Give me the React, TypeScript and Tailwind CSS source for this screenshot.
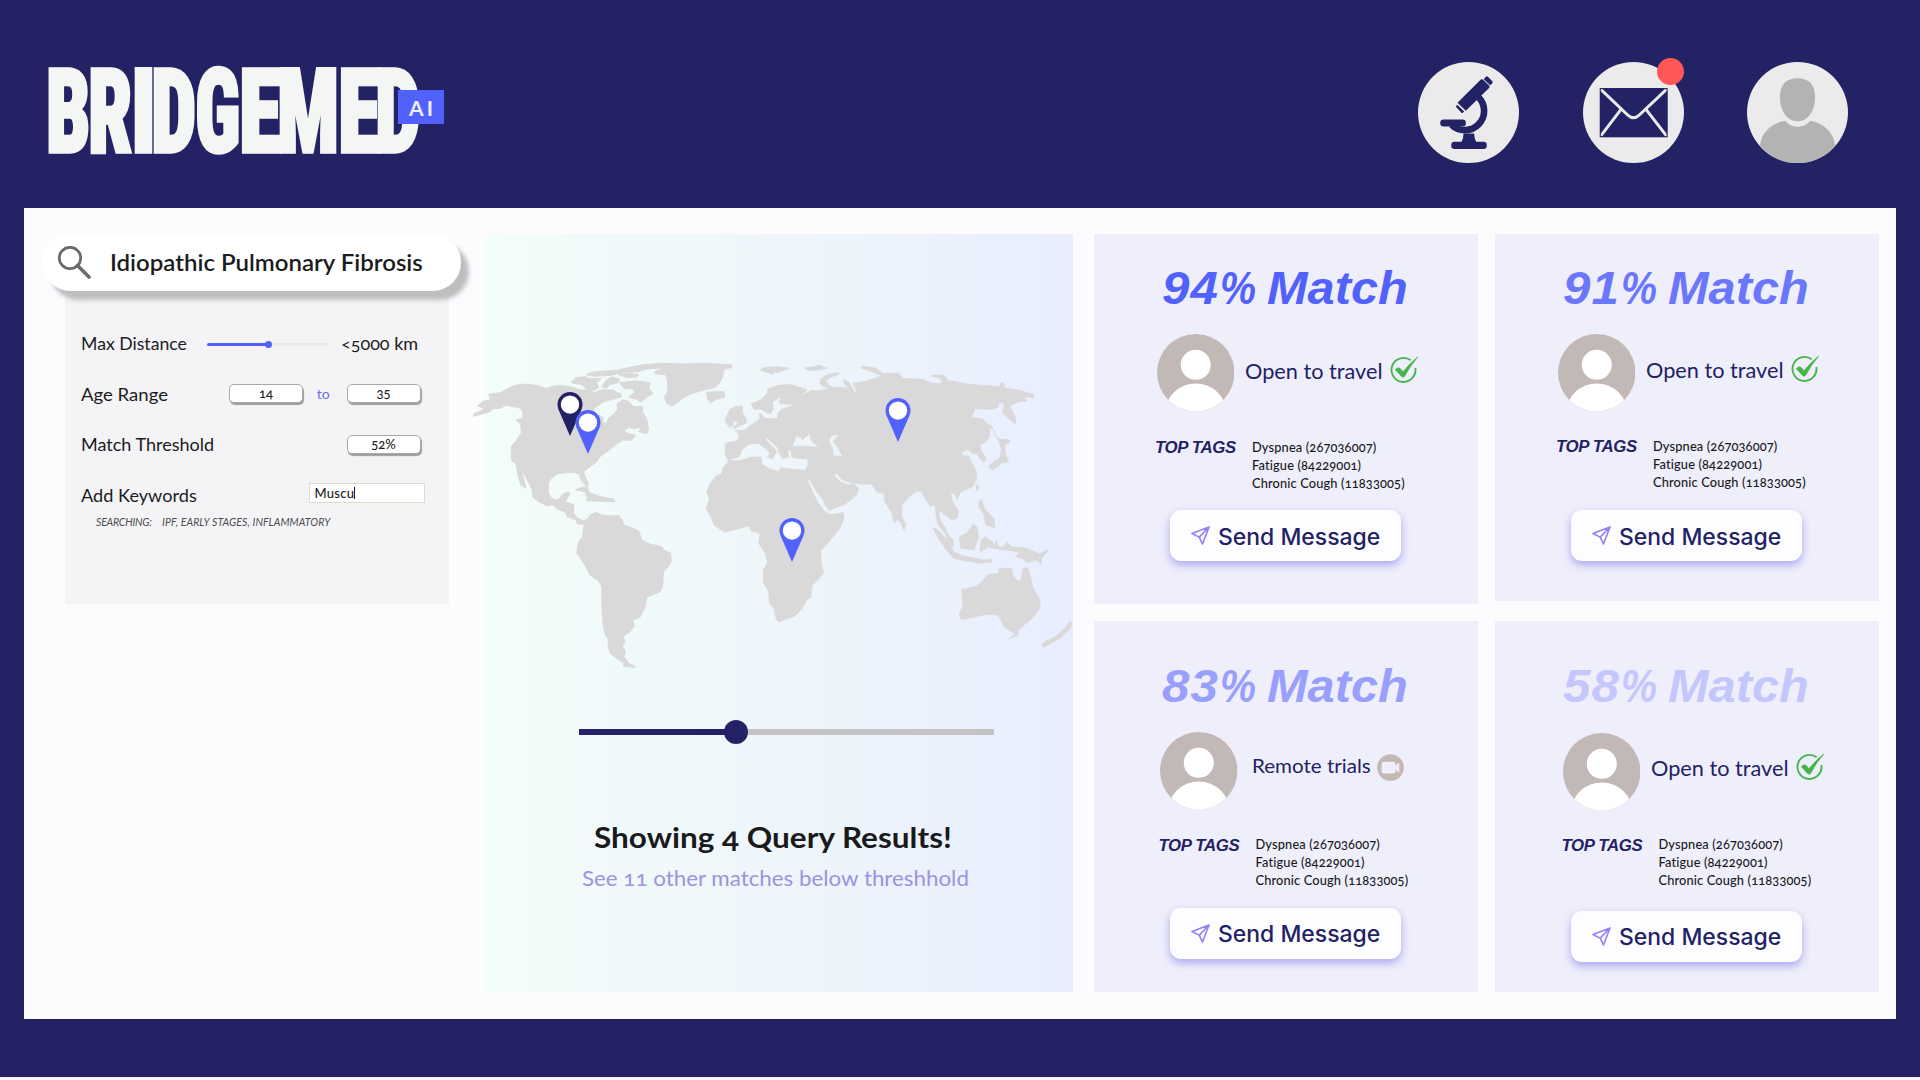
import type { ReactNode } from 'react';

const lato = "font-['Lato','Open_Sans',sans-serif] oldstyle-nums";
const inter = "font-['Inter',sans-serif]";
const liberation = "font-['Liberation_Sans',Arial,sans-serif]";

/* ---------- Header ---------- */

const wordmark = [
  { char: 'B', fit: 'w-[42.4px] scale-x-[0.675]' },
  { char: 'R', fit: 'w-[42.8px] scale-x-[0.675]' },
  { char: 'I', fit: 'w-[20.4px] scale-x-[0.77]' },
  { char: 'D', fit: 'w-[44.4px] scale-x-[0.695]' },
  { char: 'G', fit: 'w-[43.9px] scale-x-[0.665]' },
  { char: 'E', fit: 'w-[37.2px] scale-x-[0.76]' },
  { char: 'M', fit: 'w-[61px] scale-x-[0.705]' },
  { char: 'E', fit: 'w-[37.2px] scale-x-[0.76]' },
  { char: 'D', fit: 'w-[44px] scale-x-[0.70]' },
];

function Logo() {
  return (
    <div className="relative h-[101px] w-[397px]">
      <div className="ml-[-2.5px] mt-[-18.5px] flex h-[138px] font-['Roboto',sans-serif] text-[116px] font-black leading-[138px] text-[#f4f6f4] [-webkit-text-stroke:3.5px_#f4f6f4] [font-stretch:75%]">
        {wordmark.map((l, i) => (
          <span key={i} className={`shrink-0 origin-left ${l.fit}`}>
            {l.char}
          </span>
        ))}
      </div>
      <div className={`absolute left-[350px] top-[28.5px] flex h-[34px] w-[46px] items-center justify-center bg-[#5161fc] pl-[3px] text-[21px] font-bold leading-none tracking-[3px] text-[#eef0ff] ${lato}`}>
        AI
      </div>
    </div>
  );
}

function MicroscopeIcon() {
  return (
    <svg className="size-[101px]" viewBox="85 65 304 304">
      <circle cx="237" cy="217" r="152" fill="#ebebeb" />
      <g fill="#222265">
        <path d="M204 188 L274 118 Q278 115 282 119 L299 136 Q302 140 299 143 L229 212 Z" />
        <path d="M283 117 L289 110 Q292 106 296 110 L309 123 Q311 127 308 130 L302 135 Z" />
        <path d="M199 200 Q198 198 201 196 L205 195 L224 214 L220 218 Q217 220 215 217 Z" />
        <rect x="152" y="238" width="77" height="21" rx="10" />
        <rect x="185" y="305" width="107" height="22" rx="10" />
        <path d="M222 280 L254 280 Q254 296 261 308 L215 308 Q222 296 222 280 Z" />
      </g>
      <path d="M266 170 A58 58 0 1 1 186 254" fill="none" stroke="#222265" strokeWidth="20" />
    </svg>
  );
}

function MailIcon() {
  return (
    <svg className="size-[101px]" viewBox="577 65 304 304">
      <circle cx="729" cy="217" r="152" fill="#ebebeb" />
      <rect x="628" y="144" width="203" height="147" fill="#222265" />
      <g fill="none" stroke="#ebebeb" strokeWidth="9">
        <path d="M629 146 L713 226 Q729 240 745 226 L830 146" />
        <path d="M692 207 L630 288 M766 207 L829 288" />
      </g>
      <rect x="629" y="145" width="201" height="145" fill="none" stroke="#222265" strokeWidth="3" />
    </svg>
  );
}

function ProfileIcon() {
  return (
    <svg className="size-[101px]" viewBox="1071 65 304 304">
      <clipPath id="profile-clip">
        <circle cx="1223" cy="217" r="152" />
      </clipPath>
      <circle cx="1223" cy="217" r="152" fill="#ebebeb" />
      <g fill="#b3b3b3" clipPath="url(#profile-clip)">
        <path d="M1223 114 C1256 114 1276 132 1276 170 C1276 212 1254 243 1223 243 C1192 243 1170 212 1170 170 C1170 132 1190 114 1223 114 Z" />
        <path d="M1110 318 C1113 276 1148 246 1187 242 C1203 266 1243 266 1261 242 C1300 248 1334 278 1336 318 L1336 370 L1110 370 Z" />
      </g>
    </svg>
  );
}

function Header() {
  return (
    <header className="flex h-[208px] items-start justify-between pl-[48px] pr-[72px] pt-[61.5px]">
      <Logo />
      <div className="flex gap-[63.5px]">
        <MicroscopeIcon />
        <div className="relative">
          <MailIcon />
          <span className="absolute right-0 top-[-3.5px] size-[27px] rounded-full bg-[#ff5757]" />
        </div>
        <ProfileIcon />
      </div>
    </header>
  );
}

/* ---------- Search and filters ---------- */

function FilterRow({ label, stretch, children }: { label: string; stretch: string; children: ReactNode }) {
  return (
    <div className="flex h-[50.6px] items-center justify-between pl-[16px]">
      <span className={`mt-[2.5px] origin-left whitespace-nowrap text-[16.5px] leading-none ${stretch}`}>{label}</span>
      {children}
    </div>
  );
}

function ValueBox({ children }: { children: ReactNode }) {
  return (
    <div className="flex h-[19px] w-[74px] items-center justify-center rounded-[5px] border border-[#a9a9ab] bg-white text-[13px] font-medium leading-none shadow-[1px_2px_1px_#9d9d9f]">
      {children}
    </div>
  );
}

function SearchColumn() {
  return (
    <aside className={`w-[461px] shrink-0 pl-[18px] pt-[26px] text-[#1c1c1e] ${lato}`}>
      <div className="relative z-10 flex h-[57px] w-[418.5px] items-center rounded-full bg-white pl-[16px] shadow-[8px_9px_4px_#bebec0]">
        <svg className="size-[33px]" viewBox="0 0 33 33" fill="none" stroke="#6b6b6b">
          <circle cx="12" cy="12" r="10.7" strokeWidth="2.8" />
          <path d="M19.5 19.5 L31 31" strokeWidth="3.6" strokeLinecap="round" />
        </svg>
        <span className="ml-[18.5px] mt-[2px] origin-left scale-x-[1.067] whitespace-nowrap text-[22.5px] font-semibold leading-none">
          Idiopathic Pulmonary Fibrosis
        </span>
      </div>
      <section className="ml-[23px] mt-[-29px] h-[342px] w-[383.5px] bg-[#f4f4f6] pt-[56px]">
        <FilterRow label="Max Distance" stretch="scale-x-[1.07]">
          <div className="mr-[29px] mt-[2px] flex items-center">
            <div className="flex h-[3px] w-[121px] items-center rounded-full bg-[#e9e9eb]">
              <div className="h-[3px] w-[60px] rounded-full bg-[#5161fc]" />
              <div className="-ml-[2px] size-[7px] rounded-full bg-[#5161fc]" />
            </div>
            <span className="ml-[13.5px] w-[78.5px] origin-left scale-x-[1.09] whitespace-nowrap text-[16.5px] leading-none">&lt;5000 km</span>
          </div>
        </FilterRow>
        <FilterRow label="Age Range" stretch="scale-x-[1.125]">
          <div className="mr-[28px] flex items-center">
            <ValueBox>14</ValueBox>
            <span className="w-[43.5px] pr-[3px] text-center text-[14px] leading-none text-[#6a72e0]">to</span>
            <ValueBox>35</ValueBox>
          </div>
        </FilterRow>
        <FilterRow label="Match Threshold" stretch="scale-x-[1.092]">
          <div className="mr-[28px]">
            <ValueBox>52%</ValueBox>
          </div>
        </FilterRow>
        <FilterRow label="Add Keywords" stretch="scale-x-[1.1]">
          <div className="mb-[4px] mr-[24px] flex h-[20px] w-[116px] items-center border border-[#dcdccb] bg-white pl-[5px] text-[13px] font-medium leading-none tracking-[0.3px]">
            <span className="mt-px">Muscu</span>
            <span className="h-[12px] w-px bg-[#1c1c1e]" />
          </div>
        </FilterRow>
        <p className="ml-[31px] mt-[-5px] flex whitespace-nowrap text-[10.5px] italic leading-[14px] text-[#4c4c4e]">
          <span className="w-[66px] tracking-[-0.2px]">SEARCHING:</span>
          <span className="tracking-[0.1px]">IPF, EARLY STAGES, INFLAMMATORY</span>
        </p>
      </section>
    </aside>
  );
}

/* ---------- Map ---------- */

function WorldMap() {
  return (
    <svg className="absolute left-[-15px] top-[106px] h-[340px] w-[603px]" viewBox="0 0 1809 1020">
      <g fill="#d9d9d9" stroke="#d9d9d9" strokeWidth="3" strokeLinejoin="round" fillRule="evenodd">
        <path d="M11 222 Q28 213 45 207 L23 198 L38 184 L62 180 L56 163 L92 158 L108 149 C130 135 150 132 170 133 C195 134 215 140 228 146 C245 137 270 135 295 139 L332 150 L362 150 L372 158 L392 150 L430 150 L440 158 L452 160 L455 170 L428 178 L400 186 L378 200 L368 212 L385 225 L398 232 L400 250 L410 250 L415 235 L432 222 L443 208 L441 192 L458 180 L476 184 L490 200 L517 200 L519 220 L530 235 L536 270 L530 281 L506 275 L516 262 L490 266 L478 262 L462 270 L472 280 L497 286 L485 300 L458 301 L440 312 L415 332 L390 350 L380 365 L360 380 L341 395 L345 410 L355 430 L352 442 L343 432 L332 418 L328 402 L310 397 L290 397 L262 402 L245 413 L235 430 L235 455 L242 472 L254 480 L268 478 L275 465 L288 457 L300 459 L292 475 L285 485 L300 490 L311 495 L310 518 L322 534 L340 542 L352 538 L362 524 L378 517 L395 525 L420 528 L445 526 L455 538 L462 555 L490 565 L508 575 L514 600 L540 612 L575 620 L582 630 L602 640 L604 663 L595 680 L580 695 L578 740 L570 755 L530 772 L526 798 L510 832 L487 842 L493 858 L478 878 L459 888 L465 905 L457 918 L466 935 L462 950 L475 968 L497 982 L460 979 L462 968 L440 956 L420 938 L415 920 L414 896 L406 885 L399 850 L396 800 L395 738 L385 722 L360 705 L345 675 L320 638 L326 605 L338 590 L342 553 L322 552 L318 540 L292 530 L285 515 L262 508 L250 495 L230 497 L210 487 L188 472 L187 450 L172 420 L154 386 L160 412 L168 445 L153 436 L145 408 L138 372 L124 360 L124 320 L140 300 L154 280 L152 252 L139 240 L158 234 L158 212 L145 202 L130 200 L108 196 L88 206 L70 205 L60 215 L11 229 Z" />
        <path d="M303 127 L318 113 L345 110 L360 116 L392 116 L380 130 L387 142 L372 151 L350 148 L335 133 L312 130 Z" />
        <path d="M348 104 L375 95 L440 91 L480 82 L520 74 L580 70 L640 72 L700 70 L784 74 L787 82 L762 88 L758 110 L748 130 L735 142 L700 150 L660 163 L638 175 L620 190 L606 197 L590 190 L583 170 L594 155 L592 120 L585 103 L556 102 L553 96 L585 83 L530 87 L505 95 L470 96 L420 106 L372 109 Z" />
        <path d="M445 104 L480 99 L506 105 L500 111 L470 112 Z M408 122 L426 110 L448 118 L443 128 L420 134 L408 146 L396 140 Z" />
        <path d="M448 128 L500 123 L540 128 L537 145 L549 160 L530 172 L512 187 L500 178 L477 172 L495 155 L485 145 L463 146 Z" />
        <path d="M317 449 L340 441 L353 445 L358 458 L385 468 L432 478 L435 485 L400 484 L350 482 L352 472 L345 455 Z" />
        <path d="M710 157 L762 154 L763 172 L740 178 L722 188 L713 178 Z" />
      </g>
      <g transform="translate(660 0)" fill="#d9d9d9" stroke="#d9d9d9" strokeWidth="2" strokeLinejoin="round" fillRule="evenodd">
        <path d="M106 345 L106 310 L142 302 L148 286 L135 271 L165 270 L178 258 L200 245 L210 232 L206 221 L216 222 L222 235 L262 236 L264 220 L275 208 L318 193 L290 193 L268 190 L272 170 L248 186 L250 208 L242 221 L228 218 L215 208 L192 208 L183 192 L215 178 L232 160 L232 148 L262 136 L300 133 L330 142 L352 150 L330 168 L365 152 L400 150 L425 142 L460 142 L478 148 L462 130 L460 118 L475 125 L488 145 L495 160 L499 152 L488 130 L520 125 L575 108 L548 96 L512 84 L516 78 L555 84 L580 100 L625 99 L638 115 L700 118 L725 130 L756 130 L750 115 L722 108 L735 104 L762 106 L775 122 L800 125 L830 132 L930 140 L930 132 L938 127 L945 134 L938 142 L975 148 L1030 162 L1031 173 L1002 170 L1011 184 L985 186 L968 193 L960 202 L975 228 L977 253 L955 235 L936 215 L942 200 L938 186 L926 190 L925 200 L910 208 L855 206 L845 232 L878 236 L890 250 L900 265 L899 290 L888 306 L870 313 L872 330 L888 355 L882 368 L868 355 L862 342 L848 340 L833 328 L815 337 L816 346 L838 350 L845 368 L860 395 L860 415 L850 438 L832 448 L812 456 L801 480 L795 460 L782 462 L788 485 L806 515 L800 535 L785 540 L765 524 L748 510 L748 535 L765 562 L778 590 L791 600 L789 622 L775 605 L765 580 L745 555 L739 530 L735 495 L720 498 L705 475 L695 455 L680 454 L660 468 L636 495 L635 530 L641 540 L648 555 L642 570 L632 550 L624 538 L612 550 L605 520 L582 480 L582 460 L562 458 L545 432 L510 432 L470 425 L455 418 L438 400 L432 405 L450 425 L475 435 L490 430 L506 445 L500 465 L470 490 L418 512 L405 495 L400 480 L380 455 L358 417 L353 420 L370 460 L385 490 L405 515 L420 523 L460 518 L462 535 L450 565 L420 602 L392 632 L394 665 L401 700 L366 738 L363 772 L350 780 L335 808 L315 828 L265 846 L258 835 L252 805 L238 790 L236 757 L220 725 L220 690 L232 668 L226 640 L206 610 L210 580 L182 572 L178 558 L130 570 L105 577 L72 555 L62 530 L48 505 L58 475 L50 455 L60 430 L78 408 L95 402 L98 385 L115 365 Z M122 358 L125 362 L150 362 L180 352 L213 350 L216 372 L240 387 L265 394 L272 384 L345 391 L354 375 L353 357 L330 356 L305 352 L304 330 L292 335 L297 350 L278 356 L268 340 L262 322 L226 290 L228 300 L262 336 L255 342 L250 356 L232 352 L240 340 L225 325 L205 310 L178 312 L155 330 L148 350 Z M306 320 L318 290 L332 290 L335 300 L360 282 L362 300 L385 322 L340 318 Z M418 295 L428 286 L447 284 L430 305 L445 325 L458 350 L430 347 L428 325 L418 308 Z" />
        <path d="M210 90 Q220 79 260 80 L298 84 L275 94 L262 98 L255 95 L248 104 L235 98 Z M342 84 L365 81 L390 75 L402 82 L413 84 L400 88 L360 92 Z M389 132 L392 118 L410 104 L440 98 L449 102 L422 112 L409 122 L412 132 L428 142 L405 142 Z" />
        <path d="M120 208 L135 200 L158 198 L157 215 L168 235 L170 248 L150 258 L133 266 L129 262 L144 250 L128 240 L130 256 L118 262 L106 245 L108 232 Z" />
        <path d="M890 249 L905 258 L918 288 L930 298 L945 298 L960 300 L958 308 L944 315 L946 340 L956 365 L935 370 L908 391 L895 382 L910 366 L928 355 L935 330 L925 302 L910 272 Z M857 436 L864 434 L867 446 L861 451 Z" />
        <path d="M868 480 L875 479 L885 508 L912 535 L915 564 L887 554 L882 525 L866 500 Z M728 562 L745 570 L770 598 L792 635 L820 648 L880 660 L908 657 L905 667 L870 670 L820 662 L790 654 L765 625 L742 590 Z M808 590 L830 580 L850 553 L862 562 L866 590 L853 630 L812 625 Z" />
        <path d="M872 600 L885 591 L905 603 L915 618 L919 600 L925 620 L942 620 L950 606 L965 620 L1010 625 L1050 642 L1075 628 L1068 640 L1054 655 L1055 674 L1038 660 L1012 668 L995 655 L975 650 L990 638 L965 632 L930 628 L895 622 L870 636 Z" />
        <path d="M815 748 L862 738 L897 702 L925 700 L928 685 L965 685 L968 705 L982 722 L992 722 L998 690 L1005 682 L1013 684 L1020 705 L1030 745 L1051 782 L1048 808 L1030 832 L985 870 L984 886 L955 898 L975 882 L942 860 L925 825 L885 824 L815 839 L807 822 L818 800 Z M1053 914 L1065 905 L1095 890 L1125 865 L1138 845 L1146 848 L1142 865 L1110 895 L1062 922 Z" />
      </g>
    </svg>
  );
}

function Pin({ place, color }: { place: string; color: string }) {
  return (
    <svg className={`absolute h-[44px] w-[26px] ${place}`} viewBox="0 0 26 44">
      <path d="M13 0 C20 0 25.5 5.5 25.5 12.5 Q25.5 15 24.5 17.5 L13 44 L1.5 17.5 Q0.5 15 0.5 12.5 C0.5 5.5 6 0 13 0 Z" fill={color} />
      <circle cx="13" cy="12.6" r="9.2" fill="#fff" />
    </svg>
  );
}

function MapPanel() {
  return (
    <section className={`relative mt-[26px] h-[758px] w-[588px] shrink-0 bg-linear-to-r from-[#f3fdf9] via-[#eef6fb] to-[#e8eefe] ${lato}`}>
      <WorldMap />
      <Pin place="left-[72px] top-[157.5px]" color="#222265" />
      <Pin place="left-[90px] top-[175.5px]" color="#5161fc" />
      <Pin place="left-[400px] top-[163.5px]" color="#5161fc" />
      <Pin place="left-[293.5px] top-[283.5px]" color="#5161fc" />
      <div className="ml-[94px] mt-[486px] flex h-[24px] w-[415px] items-center">
        <div className="h-[6.5px] w-[150.5px] bg-[#222265]" />
        <div className="-ml-[6px] size-[24px] shrink-0 rounded-full bg-[#222265]" />
        <div className="h-[6.5px] grow bg-[#c4c4c6]" />
      </div>
      <h2 className="ml-[109px] mt-[73px] origin-left scale-x-[1.087] whitespace-nowrap text-[29px] font-bold leading-[40px] text-[#1a1a1c]">
        Showing 4 Query Results!
      </h2>
      <p className="ml-[97px] mt-[6.5px] origin-left scale-x-[1.09] whitespace-nowrap text-[20.5px] leading-[28px] text-[#9a94e0]">
        See 11 other matches below threshhold
      </p>
    </section>
  );
}

/* ---------- Match cards ---------- */

function Avatar() {
  return (
    <svg className="size-[77.5px] shrink-0" viewBox="0 0 78 78">
      <clipPath id="avatar-clip">
        <circle cx="39" cy="39" r="39" />
      </clipPath>
      <g clipPath="url(#avatar-clip)">
        <rect width="78" height="78" fill="#c2b8b6" />
        <circle cx="39" cy="31" r="15.1" fill="#fff" />
        <circle cx="39" cy="81" r="31.3" fill="#fff" />
      </g>
    </svg>
  );
}

function CheckIcon() {
  return (
    <svg className="h-[27px] w-[28px]" viewBox="933 408 84 81">
      <path d="M995 421 A36 36 0 1 0 1009 444" fill="none" stroke="#45b549" strokeWidth="5.5" />
      <path d="M949 449 Q956 440 963 445 L972 455 Q992 430 1016 411 Q992 440 977 469 Q972 475 967 469 Z" fill="#45b549" stroke="#45b549" strokeWidth="2" />
    </svg>
  );
}

function VideoIcon() {
  return (
    <svg className="size-[27px]" viewBox="0 0 27 27">
      <circle cx="13.5" cy="13.5" r="13.3" fill="#c2b8b6" />
      <rect x="4.6" y="7.8" width="14" height="11.8" rx="2" fill="#efeefb" />
      <path d="M18 12.5 L20.5 9.6 Q22.3 8.4 22.3 10 L22.3 17.4 Q22.3 19 20.5 17.8 L18 15 Z" fill="#efeefb" />
    </svg>
  );
}

function SendIcon() {
  return (
    <svg className="size-[19px]" viewBox="332 919 58 58" fill="none" stroke="#9381f3" strokeWidth="5" strokeLinejoin="round" strokeLinecap="round">
      <path d="M387 922 L335 942 L357 953 L367 974 Z M387 922 L357 953" />
    </svg>
  );
}

type Match = {
  score: string;
  remote?: boolean;
  card: string;
  color: string;
  person: string;
  status: string;
  tags: string;
  button: string;
};

const matches: Match[] = [
  { score: '94', card: 'h-[370px] pt-[30px]', color: 'text-[#5161fc]', person: 'pl-[63px] mt-[22px]', status: 'mt-[23.5px] pl-[11px]', tags: 'mt-[26px] pl-[61.5px]', button: 'mt-[18.5px]' },
  { score: '91', card: 'h-[367px] pt-[30px]', color: 'text-[#6a77fd]', person: 'pl-[63px] mt-[22px]', status: 'mt-[22.5px] pl-[11px]', tags: 'mt-[25px] pl-[61.5px]', button: 'mt-[19.5px]' },
  { score: '83', remote: true, card: 'h-[371px] pt-[41px]', color: 'text-[#989ffc]', person: 'pl-[66.5px] mt-[22px]', status: 'mt-[20.5px] pl-[14px]', tags: 'mt-[26px] pl-[65px]', button: 'mt-[18.5px]' },
  { score: '58', card: 'h-[371px] pt-[41px]', color: 'text-[#c3c7fd]', person: 'pl-[68px] mt-[23px]', status: 'mt-[21.5px] pl-[11px]', tags: 'mt-[25px] pl-[67px]', button: 'mt-[21.5px]' },
];

function MatchCard({ m }: { m: Match }) {
  return (
    <article className={`w-[384px] bg-[#efeefb] ${m.card}`}>
      <h3 className={`flex h-[48px] whitespace-nowrap pl-[68.5px] text-[46px] font-bold italic leading-[48px] ${m.color} ${liberation}`}>
        <span className="w-[58px] origin-left scale-x-[1.07] tracking-[1px]">{m.score}</span>
        <span className="w-[36px] origin-left scale-x-[0.88]">%</span>
        <span className="ml-[11px] origin-left scale-x-[1.06]">Match</span>
      </h3>
      <div className={`flex items-start ${m.person}`}>
        <Avatar />
        <div className={`flex h-[28px] items-center whitespace-nowrap text-[#222265] ${m.status} ${lato}`}>
          <span className={m.remote ? 'w-[118px] origin-left scale-x-[1.055] text-[19.5px]' : 'w-[136px] origin-left scale-x-[1.07] text-[20.3px]'}>
            {m.remote ? 'Remote trials' : 'Open to travel'}
          </span>
          <span className={m.remote ? 'ml-[7px] mt-[3px]' : 'mb-[4px] ml-[9px]'}>{m.remote ? <VideoIcon /> : <CheckIcon />}</span>
        </div>
      </div>
      <div className={`flex items-start ${m.tags}`}>
        <span className={`mt-[1.5px] w-[97px] whitespace-nowrap text-[16.8px] font-bold italic leading-[18px] tracking-[-0.35px] text-[#222265] ${liberation}`}>
          TOP TAGS
        </span>
        <ul className={`whitespace-nowrap text-[12.8px] font-medium leading-[18px] tracking-[0.15px] text-[#1a1a1c] ${lato}`}>
          <li>Dyspnea (267036007)</li>
          <li>Fatigue (84229001)</li>
          <li>Chronic Cough (11833005)</li>
        </ul>
      </div>
      <button className={`ml-[76px] flex h-[51px] w-[231.5px] items-center rounded-[11px] bg-[#fdfdff] pl-[21px] text-[22.5px] font-medium text-[#222265] shadow-[0_4px_8px_#a9aaf0] ${m.button} ${inter}`}>
        <SendIcon />
        <span className="ml-[8.5px] mt-[2px] origin-left scale-x-[1.02] whitespace-nowrap">Send Message</span>
      </button>
    </article>
  );
}

export default function App() {
  return (
    <div className="flex h-[1080px] w-[1920px] flex-col overflow-hidden bg-[#f9f4fa]">
      <div className="h-[1077px] bg-[#222265]">
        <Header />
        <main className="mx-[24px] flex h-[810.5px] bg-[#fcfcff]">
          <SearchColumn />
          <MapPanel />
          <div className="ml-[20.5px] mt-[26px] flex gap-[17px]">
            <div className="flex flex-col gap-[16.5px]">
              <MatchCard m={matches[0]} />
              <MatchCard m={matches[2]} />
            </div>
            <div className="flex flex-col gap-[19.5px]">
              <MatchCard m={matches[1]} />
              <MatchCard m={matches[3]} />
            </div>
          </div>
        </main>
      </div>
    </div>
  );
}
